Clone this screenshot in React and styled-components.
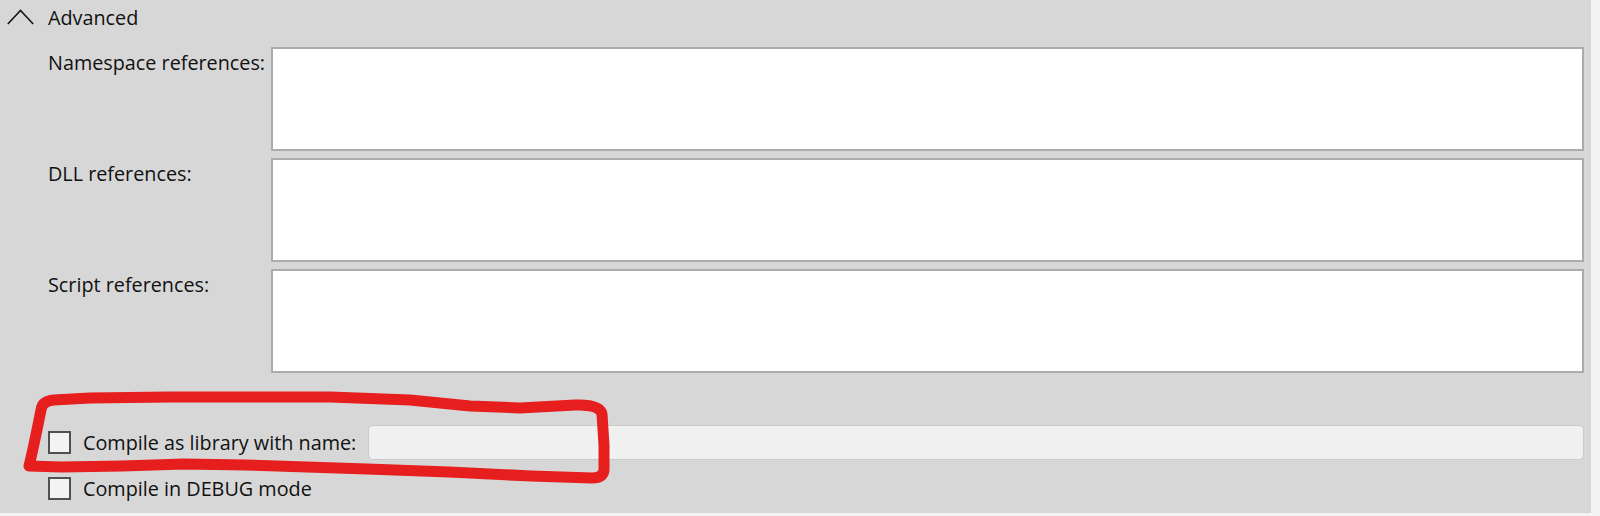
import React from "react";
import styled, { createGlobalStyle } from "styled-components";

const Global = createGlobalStyle`
  html, body { margin: 0; padding: 0; background: #f4f4f4; }
  body { font-family: "Open Sans", "Noto Sans", sans-serif; color: #111; }
`;

const Panel = styled.div`
  position: relative;
  width: 1591px;
  height: 513px;
  background: #d7d7d7;
  box-sizing: border-box;
  padding-right: 7px;
  display: flex;
  flex-direction: column;
`;

const Header = styled.div`
  height: 34px;
  display: flex;
  align-items: center;
  gap: 14px;
  padding-left: 7px;
  font-size: 19.8px;
`;

const Chevron = styled.svg`
  width: 27px;
  height: 16px;
  display: block;
  margin-top: -1px;
`;

const FieldGrid = styled.div`
  margin-top: 13px;
  padding-left: 48px;
  display: grid;
  grid-template-columns: 223px 1fr;
  grid-auto-rows: 104px;
  row-gap: 7px;
`;

const Label = styled.div`
  font-size: 19.8px;
  line-height: 26px;
  padding-top: 3px;
  white-space: nowrap;
`;

const TextArea = styled.div`
  border: 2px solid #acabb0;
  background: #ffffff;
  box-sizing: border-box;
`;

const Options = styled.div`
  margin-top: 52px;
  padding-left: 48px;
  display: flex;
  flex-direction: column;
  gap: ${(p) => p.$gap}px;
`;

const OptionRow = styled.div`
  display: flex;
  align-items: center;
  height: ${(p) => p.$h}px;
  gap: 12px;
  font-size: 19.8px;
  white-space: nowrap;
`;

const Box = styled.span`
  width: 23px;
  height: 23px;
  box-sizing: border-box;
  border: 2px solid #505050;
  background: #f3f3f3;
  flex: none;
`;

const NameInput = styled.div`
  flex: 1;
  height: 35px;
  margin-left: 0;
  box-sizing: border-box;
  border: 1px solid #cbcbcb;
  border-radius: 5px;
  background: #f0f0f0;
`;

const Annotation = styled.svg`
  position: absolute;
  left: 0;
  top: 0;
  width: 1591px;
  height: 513px;
  pointer-events: none;
`;

export default function App() {
  return (
    <>
      <Global />
      <Panel>
        <Header>
          <Chevron viewBox="0 0 27 16">
            <path d="M0.8 15 L13.5 1.5 L26.2 15" fill="none" stroke="#151515" strokeWidth="1.6" />
          </Chevron>
          <span>Advanced</span>
        </Header>
        <FieldGrid>
          <Label>Namespace references:</Label>
          <TextArea />
          <Label>DLL references:</Label>
          <TextArea />
          <Label>Script references:</Label>
          <TextArea />
        </FieldGrid>
        <Options $gap={15}>
          <OptionRow $h={35}>
            <Box />
            <span>Compile as library with name:</span>
            <NameInput />
          </OptionRow>
          <OptionRow $h={26}>
            <Box />
            <span>Compile in DEBUG mode</span>
          </OptionRow>
        </Options>
        <Annotation viewBox="0 0 1591 513">
          <path
            d="M29,466 C33,450 38,425 41,410 Q42,401 54,400 L90,398 L170,397 L330,397 L410,400 L470,406 L520,408 L575,405 Q600,404 602,414 L604,445 L604,470 Q603,478 592,478 L531,476 L449,472 L367,469 L245,465 L184,464 L122,466 L61,467 L29,466"
            fill="none"
            stroke="#e61e1e"
            strokeWidth="11"
            strokeLinejoin="round"
            strokeLinecap="round"
          />
        </Annotation>
      </Panel>
    </>
  );
}
